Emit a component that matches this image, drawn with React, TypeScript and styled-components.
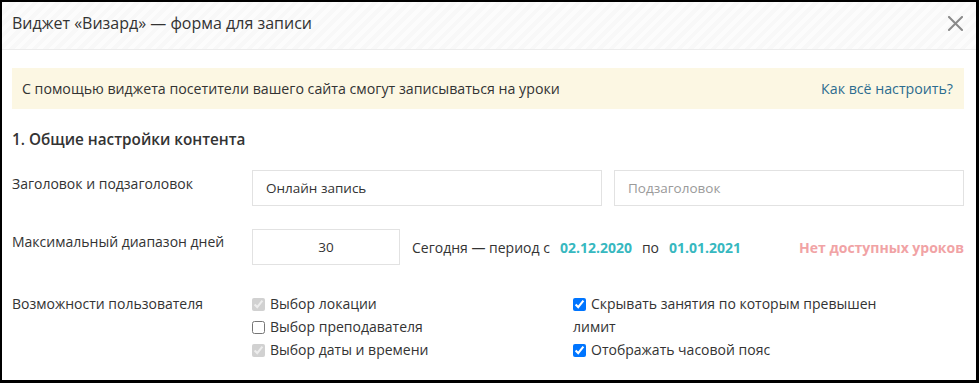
import React from "react";
import styled, { createGlobalStyle } from "styled-components";

const Global = createGlobalStyle`
  html, body { margin: 0; padding: 0; background: #fff; }
  body { font-family: "Open Sans", "Noto Sans", sans-serif; color: #333; }
  * { box-sizing: border-box; }
`;

const Frame = styled.div`
  width: 979px;
  height: 383px;
  border-style: solid;
  border-color: #000;
  border-width: 2px 3px 3px 2px;
  background: #fff;
  overflow: hidden;
  display: flex;
  flex-direction: column;
`;

const Header = styled.div`
  height: 48px;
  flex: none;
  display: flex;
  align-items: center;
  justify-content: space-between;
  padding: 0 13px 5px 10px;
  border-bottom: 1px solid #ececec;
  background: repeating-linear-gradient(
    -45deg,
    #f8f8f8 0px,
    #f8f8f8 4px,
    #fcfcfc 4px,
    #fcfcfc 8px
  );
`;

const Title = styled.h1`
  margin: 0;
  font-size: 16px;
  font-weight: 400;
  color: #333;
`;

const CloseButton = styled.button`
  border: 0;
  background: transparent;
  padding: 0;
  width: 16px;
  height: 16px;
  display: flex;
  align-items: center;
  justify-content: center;
  cursor: pointer;
`;

const Body = styled.div`
  padding: 18px 12px 0 10px;
  display: flex;
  flex-direction: column;
`;

const Notice = styled.div`
  height: 41px;
  background: #fcf7e3;
  display: flex;
  align-items: center;
  justify-content: space-between;
  padding: 0 11px 0 10px;
  font-size: 14.2px;
  color: #333;
`;

const NoticeLink = styled.a`
  color: #2c6c8f;
  text-decoration: none;
  font-size: 14.2px;
`;

const SectionTitle = styled.h2`
  margin: 20px 0 21px;
  font-size: 15.3px;
  line-height: 20px;
  font-weight: 600;
  color: #333;
`;

const Row = styled.div<{ $mt?: number }>`
  display: flex;
  align-items: flex-start;
  margin-top: ${(p) => p.$mt ?? 0}px;
`;

const Label = styled.div<{ $pt?: number }>`
  width: 240px;
  flex: none;
  font-size: 14px;
  line-height: 20px;
  padding-top: ${(p) => p.$pt ?? 4}px;
  color: #333;
`;

const Controls = styled.div`
  flex: 1;
  display: flex;
  align-items: center;
  gap: 12px;
`;

const TextInput = styled.input<{ $w?: number; $center?: boolean }>`
  height: 36px;
  width: ${(p) => (p.$w ? `${p.$w}px` : "auto")};
  flex: ${(p) => (p.$w ? "none" : "1")};
  min-width: 0;
  border: 1px solid #e2e2e2;
  background: #fff;
  padding: 0 13px;
  font-family: "Open Sans", "Noto Sans", sans-serif;
  font-size: 13.5px;
  color: #333;
  text-align: ${(p) => (p.$center ? "center" : "left")};
  outline: none;
  &::placeholder { color: #9a9a9a; }
`;

const Period = styled.div`
  display: flex;
  align-items: center;
  gap: 10px;
  font-size: 14px;
  color: #333;
  flex: 1;
  padding-top: 1px;
`;

const DateValue = styled.span`
  color: #37b8bf;
  font-weight: 700;
`;

const Warning = styled.span`
  margin-left: auto;
  color: #f1a3a5;
  font-weight: 700;
`;

const CheckColumn = styled.div<{ $w: number }>`
  width: ${(p) => p.$w}px;
  flex: none;
  display: flex;
  flex-direction: column;
  font-size: 14px;
  line-height: 23px;
`;

const CheckLabel = styled.label`
  display: block;
  color: #333;
  input {
    width: 13px;
    height: 13px;
    margin: 0 5px 0 0;
    vertical-align: -2px;
  }
`;

const App: React.FC = () => (
  <>
    <Global />
    <Frame>
      <Header>
        <Title>Виджет «Визард» — форма для записи</Title>
        <CloseButton aria-label="Закрыть">
          <svg width="15" height="15" viewBox="0 0 15 15">
            <path d="M1 1 L14 14 M14 1 L1 14" stroke="#8a8a8a" strokeWidth="2" strokeLinecap="square" />
          </svg>
        </CloseButton>
      </Header>
      <Body>
        <Notice>
          <span>С помощью виджета посетители вашего сайта смогут записываться на уроки</span>
          <NoticeLink href="#">Как всё настроить?</NoticeLink>
        </Notice>
        <SectionTitle>1. Общие настройки контента</SectionTitle>
        <Row>
          <Label>Заголовок и подзаголовок</Label>
          <Controls>
            <TextInput defaultValue="Онлайн запись" />
            <TextInput placeholder="Подзаголовок" />
          </Controls>
        </Row>
        <Row $mt={23}>
          <Label $pt={3}>Максимальный диапазон дней</Label>
          <Controls>
            <TextInput $w={148} $center defaultValue="30" />
            <Period>
              <span>Сегодня — период с</span>
              <DateValue>02.12.2020</DateValue>
              <span>по</span>
              <DateValue>01.01.2021</DateValue>
              <Warning>Нет доступных уроков</Warning>
            </Period>
          </Controls>
        </Row>
        <Row $mt={27}>
          <Label $pt={2}>Возможности пользователя</Label>
          <CheckColumn $w={321}>
            <CheckLabel><input type="checkbox" checked disabled readOnly />Выбор локации</CheckLabel>
            <CheckLabel><input type="checkbox" />Выбор преподавателя</CheckLabel>
            <CheckLabel><input type="checkbox" checked disabled readOnly />Выбор даты и времени</CheckLabel>
          </CheckColumn>
          <CheckColumn $w={320}>
            <CheckLabel><input type="checkbox" defaultChecked />Скрывать занятия по которым превышен лимит</CheckLabel>
            <CheckLabel><input type="checkbox" defaultChecked />Отображать часовой пояс</CheckLabel>
          </CheckColumn>
        </Row>
      </Body>
    </Frame>
  </>
);

export default App;
